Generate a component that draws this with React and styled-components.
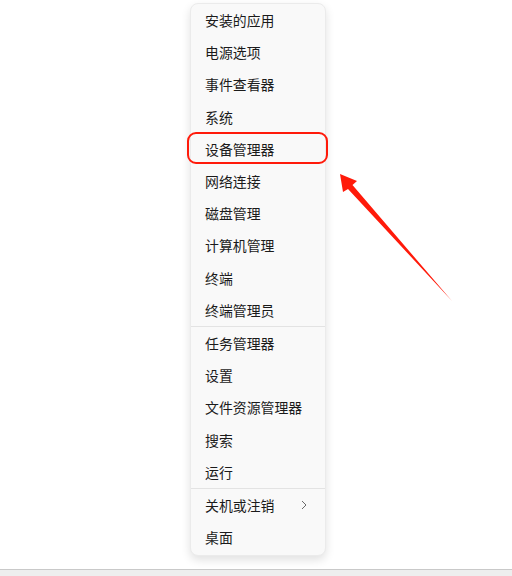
import React from 'react';
import styled, {createGlobalStyle} from 'styled-components';

const GlobalStyle = createGlobalStyle`
  html, body {
    margin: 0;
    padding: 0;
    background: #ffffff;
  }
  #root {
    width: 512px;
    height: 576px;
  }
`;

const Page = styled.div`
  position: relative;
  width: 512px;
  height: 576px;
  display: flex;
  flex-direction: column;
  overflow: hidden;
  font-family: "Noto Sans CJK SC", "Noto Sans", sans-serif;
`;

const Desktop = styled.div`
  flex: 1;
  padding: 3px 0 0 190px;
`;

const Menu = styled.div`
  width: 136px;
  box-sizing: border-box;
  padding: 0 0 2px;
  background: #f9f9f9;
  border: 1px solid #ebebeb;
  border-radius: 8px;
  box-shadow: 0 4px 10px rgba(0, 0, 0, 0.12);
`;

const Item = styled.div`
  position: relative;
  height: 32.2px;
  display: flex;
  align-items: center;
  justify-content: space-between;
  padding: 0 18px 0 14px;
  font-size: 13.9px;
  color: #1b1b1b;

  ${p => p.marked && `
    &::after {
      content: '';
      position: absolute;
      top: -1px;
      bottom: 1px;
      left: -4px;
      right: -3px;
      border: 2.5px solid #ff1a0a;
      border-radius: 9px;
    }
  `}
`;

const Divider = styled.div`
  height: 1px;
  background: #e3e3e3;
`;

const Chevron = styled.svg`
  width: 6px;
  height: 10px;
`;

const Taskbar = styled.div`
  height: 6px;
  border-top: 1px solid #c9c9c9;
  background: #eeeeee;
`;

const Arrow = styled.svg`
  position: absolute;
  left: 0;
  top: 0;
  width: 512px;
  height: 576px;
  pointer-events: none;
`;

const groups = [
  ['安装的应用', '电源选项', '事件查看器', '系统', '设备管理器', '网络连接', '磁盘管理', '计算机管理', '终端', '终端管理员'],
  ['任务管理器', '设置', '文件资源管理器', '搜索', '运行'],
  ['关机或注销', '桌面'],
];

export default function App() {
  return (
    <>
      <GlobalStyle />
      <Page>
        <Desktop>
          <Menu>
            {groups.map((group, gi) => (
              <React.Fragment key={gi}>
                {gi > 0 && <Divider />}
                {group.map(label => (
                  <Item key={label} marked={label === '设备管理器'}>
                    <span>{label}</span>
                    {label === '关机或注销' && (
                      <Chevron viewBox="0 0 6 10">
                        <path d="M1 1 L5 5 L1 9" fill="none" stroke="#6a6a6a" strokeWidth="1" />
                      </Chevron>
                    )}
                  </Item>
                ))}
              </React.Fragment>
            ))}
          </Menu>
        </Desktop>
        <Taskbar />
        <Arrow viewBox="0 0 512 576">
          <polygon
            points="340,174 357,181 352.5,185 452,301 348,189 343,192"
            fill="#ff1a0a"
          />
        </Arrow>
      </Page>
    </>
  );
}
